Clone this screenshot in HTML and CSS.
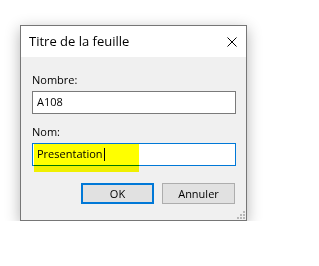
FILE: index.html
```html
<!DOCTYPE html>
<html lang="fr">
<head>
    <meta charset="UTF-8">
    <title>Titre de la feuille</title>
    <link rel="stylesheet" href="styles.css">
</head>
<body>
    <div class="dialog">
        <div class="titlebar">
            <span class="title">Titre de la feuille</span>
            <svg class="close" width="10" height="10" viewBox="0 0 10 10">
                <path d="M0.5 0.5 L9.5 9.5 M9.5 0.5 L0.5 9.5" stroke="#000" stroke-width="1" fill="none"/>
            </svg>
        </div>

        <div class="content">
            <div class="label">Nombre:</div>
            <div class="field">A108</div>

            <div class="label label-second">Nom:</div>
            <div class="field field-focus">Presentation<span class="caret"></span>
                <!-- surligneur jaune -->
                <div class="highlight"></div>
            </div>

            <div class="buttons">
                <div class="btn btn-default">OK</div>
                <div class="btn">Annuler</div>
            </div>
        </div>

        <div class="grip">
            <i style="grid-area: 1 / 3"></i>
            <i style="grid-area: 2 / 2"></i>
            <i style="grid-area: 2 / 3"></i>
            <i style="grid-area: 3 / 1"></i>
            <i style="grid-area: 3 / 2"></i>
            <i style="grid-area: 3 / 3"></i>
        </div>
    </div>
</body>
</html>
```

FILE: styles.css
```css
body {
    margin: 0;
    background: #fff;
    font-family: 'Open Sans', 'Noto Sans', sans-serif;
    font-size: 11px;
    color: #000;
}

.dialog {
    position: relative;
    width: 225px;
    margin: 25px 0 0 20px;
    border: 1px solid #767676;
    box-shadow: 0 4px 14px rgba(0,0,0,0.3);
}

.titlebar {
    height: 31px;
    background: #fff;
    display: flex;
    align-items: center;
    justify-content: space-between;
    padding: 0 9px 0 8px;
}

.title {
    font-size: 13px;
    line-height: 31px;
}

.close {
    display: block;
}

.content {
    background: #f0f0f0;
    height: 163px;
    box-sizing: border-box;
    padding: 15px 10px 0 11px;
}

.label {
    height: 15px;
    line-height: 16px;
}

.label-second {
    margin-top: 10px;
}

.field {
    position: relative;
    margin-top: 4px;
    height: 21px;
    line-height: 19px;
    padding: 0 4px;
    background: #fff;
    border: 1px solid #7a7a7a;
}

.field-focus {
    border-color: #0078d7;
}

.caret {
    display: inline-block;
    width: 1px;
    height: 13px;
    margin-left: 1px;
    background: #000;
    vertical-align: -3px;
}

.highlight {
    position: absolute;
    left: 1px;
    top: 0;
    width: 105px;
    height: 28px;
    background: #ffff00;
    mix-blend-mode: multiply;
}

.buttons {
    display: flex;
    justify-content: flex-end;
    gap: 8px;
    margin: 17px 1px 0 0;
}

.btn {
    width: 71px;
    height: 19px;
    line-height: 20px;
    text-align: center;
    background: #e1e1e1;
    border: 1px solid #adadad;
}

.btn-default {
    width: 69px;
    height: 17px;
    line-height: 18px;
    border: 2px solid #0078d7;
}

.grip {
    position: absolute;
    right: 1px;
    bottom: 1px;
    display: grid;
    grid-template-columns: repeat(3, 2px);
    grid-template-rows: repeat(3, 2px);
    gap: 1px;
}

.grip i {
    background: #b8b8b8;
}
```
